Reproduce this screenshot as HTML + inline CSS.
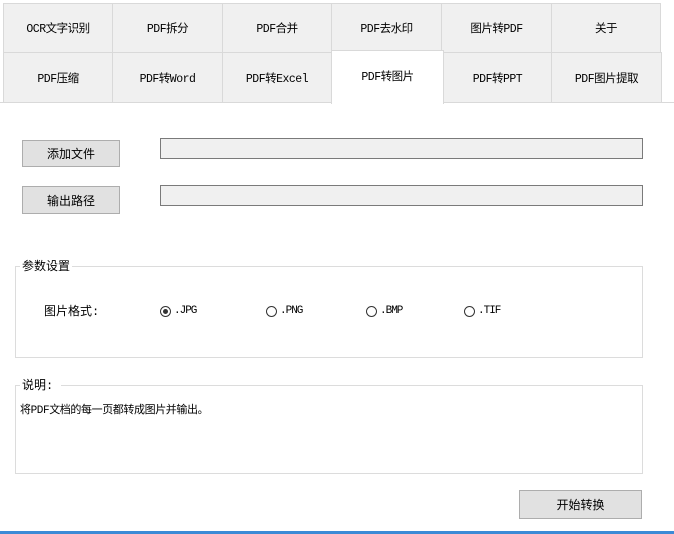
<!DOCTYPE html>
<html><head><meta charset="utf-8"><style>
body{margin:0;width:674px;height:534px;background:#fff;position:relative;overflow:hidden;font-family:"Liberation Mono","Noto Sans CJK SC",monospace;font-size:12px;color:#000}
.t{position:absolute;background:#f0f0f0;border:1px solid #d9d9d9;box-sizing:border-box;display:flex;align-items:center;justify-content:center;font-size:11.5px;letter-spacing:-0.5px}
.a{background:#fff;border-bottom:none}
.btn{position:absolute;background:#e1e1e1;border:1px solid #adadad;box-sizing:border-box;display:flex;align-items:center;justify-content:center;font-size:12px}
.fld{position:absolute;background:#f0f0f0;border:1px solid #7a7a7a;box-sizing:border-box}
.grp{position:absolute;border:1px solid #dcdcdc;box-sizing:border-box}
.lbl{position:absolute;background:#fff;font-size:12px;padding:0 2px}
.r{position:absolute;width:11px;height:11px;border:1px solid #333;border-radius:50%;box-sizing:border-box}
.tx{position:absolute;font-size:12px}
</style></head><body>
<div class="t" style="left:3px;top:3px;width:110px;height:50px">OCR文字识别</div>
<div class="t" style="left:112px;top:3px;width:111px;height:50px">PDF拆分</div>
<div class="t" style="left:222px;top:3px;width:110px;height:50px">PDF合并</div>
<div class="t" style="left:331px;top:3px;width:111px;height:50px">PDF去水印</div>
<div class="t" style="left:441px;top:3px;width:111px;height:50px">图片转PDF</div>
<div class="t" style="left:551px;top:3px;width:110px;height:50px">关于</div>
<div class="t" style="left:3px;top:52px;width:110px;height:51px">PDF压缩</div>
<div class="t" style="left:112px;top:52px;width:111px;height:51px">PDF转Word</div>
<div class="t" style="left:222px;top:52px;width:110px;height:51px">PDF转Excel</div>
<div class="t" style="left:443px;top:52px;width:109px;height:51px">PDF转PPT</div>
<div class="t" style="left:551px;top:52px;width:111px;height:51px">PDF图片提取</div>
<div style="position:absolute;left:0;top:102px;width:674px;height:1px;background:#d9d9d9"></div>
<div class="t a" style="left:331px;top:50px;width:113px;height:54px;border-color:#d9d9d9;align-items:flex-start;padding-top:17px">PDF转图片</div>
<div class="btn" style="left:22px;top:140px;width:98px;height:27px">添加文件</div>
<div class="fld" style="left:160px;top:138px;width:483px;height:21px"></div>
<div class="btn" style="left:22px;top:186px;width:98px;height:28px">输出路径</div>
<div class="fld" style="left:160px;top:185px;width:483px;height:21px"></div>
<div class="grp" style="left:15px;top:266px;width:628px;height:92px"></div>
<div class="lbl" style="left:20px;top:257px">参数设置</div>
<div class="tx" style="left:44px;top:302px">图片格式:</div>
<div class="r" style="left:160px;top:306px"><div style="position:absolute;left:2px;top:2px;width:5px;height:5px;border-radius:50%;background:#333"></div></div>
<div class="tx" style="left:174px;top:305px;font-size:11px;letter-spacing:-1px">.JPG</div>
<div class="r" style="left:266px;top:306px"></div><div class="tx" style="left:280px;top:305px;font-size:11px;letter-spacing:-1px">.PNG</div>
<div class="r" style="left:366px;top:306px"></div><div class="tx" style="left:380px;top:305px;font-size:11px;letter-spacing:-1px">.BMP</div>
<div class="r" style="left:464px;top:306px"></div><div class="tx" style="left:478px;top:305px;font-size:11px;letter-spacing:-1px">.TIF</div>
<div class="grp" style="left:15px;top:385px;width:628px;height:89px"></div>
<div class="lbl" style="left:20px;top:376px;padding-right:8px">说明:</div>
<div class="tx" style="left:20px;top:401px;font-size:11px;letter-spacing:-0.4px">将PDF文档的每一页都转成图片并输出。</div>
<div class="btn" style="left:519px;top:490px;width:123px;height:29px">开始转换</div>
<div style="position:absolute;left:0;top:531px;width:674px;height:3px;background:#3c8ad6"></div>
</body></html>
